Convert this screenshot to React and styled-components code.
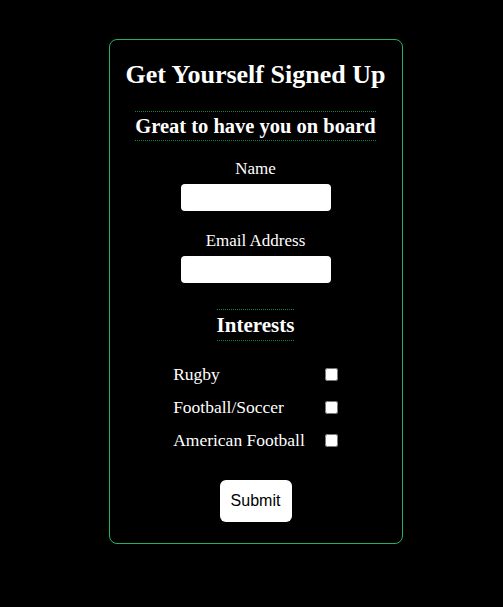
import { Fragment } from "react";
import styled, { createGlobalStyle } from "styled-components";

const Global = createGlobalStyle`
  html, body {
    margin: 0;
    background: #000;
  }
  body {
    padding: 39px 0 0 8px;
    font-family: "Liberation Serif", "DejaVu Serif", serif;
    color: #fff;
  }
`;

const Page = styled.div`
  display: flex;
  justify-content: center;
`;

const Card = styled.form`
  width: 292px;
  height: 503px;
  box-sizing: content-box;
  border: 1px solid #22b063;
  border-radius: 8px;
  display: flex;
  flex-direction: column;
  align-items: center;
`;

const Title = styled.h1`
  margin: 19px 0 0;
  font-size: 26px;
  font-weight: 700;
  line-height: 32px;
`;

const Ruled = styled.h2`
  margin: ${(p) => p.$top}px 0 0;
  padding: ${(p) => p.$pad}px 0;
  border-top: 1px dotted #0d8a40;
  border-bottom: 1px dotted #0d8a40;
  font-size: ${(p) => p.$size}px;
  font-weight: 700;
  line-height: 24px;
`;

const Field = styled.label`
  display: flex;
  flex-direction: column;
  align-items: center;
  margin-top: ${(p) => p.$top}px;
  font-size: 17px;
  line-height: 20px;
`;

const Input = styled.input`
  margin-top: 5px;
  width: 150px;
  height: 27px;
  box-sizing: border-box;
  border: none;
  border-radius: 4px;
  background: #fff;
`;

const Grid = styled.div`
  margin-top: 23px;
  display: grid;
  grid-template-columns: auto auto;
  column-gap: 20px;
  row-gap: 13px;
  align-items: center;
  font-size: 17.5px;
  line-height: 20px;
`;

const Box = styled.input`
  margin: 0;
  width: 13px;
  height: 13px;
`;

const Submit = styled.button`
  margin-top: 30px;
  width: 72px;
  height: 42px;
  border: none;
  border-radius: 6px;
  background: #fff;
  color: #000;
  font-family: "Liberation Sans", Arial, sans-serif;
  font-size: 16px;
`;

const interests = ["Rugby", "Football/Soccer", "American Football"];

export default function App() {
  return (
    <Page>
      <Global />
      <Card onSubmit={(e) => e.preventDefault()}>
        <Title>Get Yourself Signed Up</Title>
        <Ruled $top={20} $pad={2} $size={20.5}>
          Great to have you on board
        </Ruled>
        <Field $top={18}>
          Name
          <Input type="text" />
        </Field>
        <Field $top={20}>
          Email Address
          <Input type="email" />
        </Field>
        <Ruled $top={26} $pad={3} $size={21}>
          Interests
        </Ruled>
        <Grid>
          {interests.map((name) => (
            <Fragment key={name}>
              <span>{name}</span>
              <Box type="checkbox" />
            </Fragment>
          ))}
        </Grid>
        <Submit type="submit">Submit</Submit>
      </Card>
    </Page>
  );
}
